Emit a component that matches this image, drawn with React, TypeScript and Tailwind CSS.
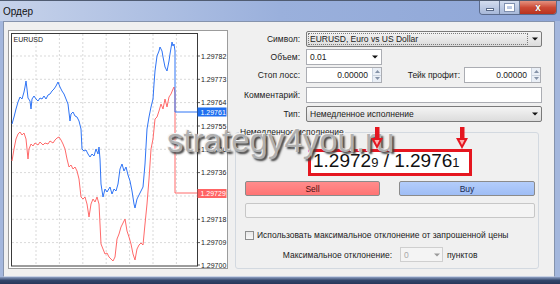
import React from "react";

const blue: [number, number][] = [
  [12,125],[14,118],[16,110],[18,103],[20,98],[22,100],[24,93],[25,88],[26,82],[27,90],[28,99],[30,102],[31,110],[32,100],[34,97],[36,100],[38,102],[40,99],[42,100],[44,97],[46,100],[48,96],[50,95],[52,92],[54,90],[56,87],[58,83],[60,88],[62,92],[64,95],[66,100],[68,105],[70,122],[71,115],[73,113],[75,117],[77,118],[79,122],[81,130],[82,150],[84,152],[86,151],[88,155],[90,158],[92,155],[94,157],[96,150],[98,155],[99,148],[100,160],[101,185],[103,198],[105,190],[107,193],[110,188],[112,195],[114,190],[116,192],[118,185],[120,170],[122,165],[124,172],[126,168],[128,176],[130,182],[132,192],[134,205],[135,209],[137,200],[139,196],[141,192],[143,188],[145,165],[147,130],[149,118],[151,108],[153,100],[154,85],[155,72],[157,57],[159,52],[160,48],[162,52],[163,58],[165,68],[167,72],[169,62],[170,55],[172,43],[173,47],[174,45],[175,52],[175,113],[197,113]
];
const red: [number, number][] = [
  [12,162],[14,150],[16,140],[18,135],[20,133],[22,136],[24,134],[26,140],[28,160],[29,150],[31,145],[33,147],[35,144],[38,146],[40,143],[43,146],[45,144],[48,145],[50,142],[53,144],[55,141],[57,139],[59,138],[61,141],[63,145],[65,150],[67,160],[69,168],[71,166],[73,170],[75,168],[77,172],[79,180],[81,198],[83,200],[85,198],[87,205],[89,218],[91,205],[93,200],[95,203],[97,198],[99,205],[101,245],[103,250],[105,255],[107,254],[109,258],[111,260],[113,262],[115,258],[117,240],[119,235],[121,228],[123,224],[125,220],[127,232],[129,238],[131,245],[133,255],[135,261],[137,250],[139,246],[141,244],[143,246],[145,225],[147,205],[149,180],[151,150],[153,140],[155,120],[157,118],[159,112],[161,105],[163,110],[165,100],[167,108],[169,98],[171,95],[173,90],[174,88],[175,94],[175,194],[197,194]
];

const pts = (a: [number, number][]) => a.map((p) => p.join(",")).join(" ");

const priceLines: [string, number][] = [
  ["1.29782", 57],
  ["1.29773", 80.3],
  ["1.29764", 103.6],
  ["1.29755", 127],
  ["1.29746", 150.3],
  ["1.29736", 173.6],
  ["1.29718", 220.3],
  ["1.29709", 243.6],
  ["1.29700", 266],
];
const gridY = [57, 80.3, 103.6, 127, 150.3, 173.6, 197, 220.3, 243.6];
const gridX = [36, 59.4, 82.8, 106.2, 129.6, 153, 176.4];

function Chart() {
  return (
    <div className="w-[220px] h-[239px] border border-[#9c9c9c] bg-white shrink-0">
      <svg width="218" height="237" viewBox="9 32 218 237" className="block">
        {gridX.map((x) => (
          <line key={"x" + x} x1={x} y1={35} x2={x} y2={267} stroke="#cfcfcf" strokeWidth="0.8" strokeDasharray="2 2" />
        ))}
        {gridY.map((y) => (
          <line key={"y" + y} x1={12} y1={y} x2={197} y2={y} stroke="#cfcfcf" strokeWidth="0.8" strokeDasharray="2 2" />
        ))}
        <rect x="11.5" y="34.5" width="186" height="232.5" fill="none" stroke="#3a3a3a" strokeWidth="1" />
        <polyline points={pts(red)} fill="none" stroke="#ff6a6a" strokeWidth="1" strokeLinejoin="round" />
        <polyline points={pts(blue)} fill="none" stroke="#2f74f5" strokeWidth="1" strokeLinejoin="round" />
        <text x="13.5" y="43" fontSize="7" fill="#1a1a1a" fontFamily="Liberation Sans, Arial, sans-serif">EURUSD</text>
        {priceLines.map(([t, y]) => (
          <g key={t}>
            <line x1={197} y1={y} x2={200} y2={y} stroke="#3a3a3a" strokeWidth="0.8" />
            <text x="201" y={y + 2.5} fontSize="7" fill="#1a1a1a" fontFamily="Liberation Sans, Arial, sans-serif">{t}</text>
          </g>
        ))}
        <rect x="197.5" y="108.5" width="29" height="9" fill="#1f6ff0" />
        <text x="200.5" y="115.8" fontSize="7" fill="#ffffff" fontFamily="Liberation Sans, Arial, sans-serif">1.29761</text>
        <rect x="197.5" y="190" width="29" height="9" fill="#ff6464" />
        <text x="200.5" y="197.3" fontSize="7" fill="#ffffff" fontFamily="Liberation Sans, Arial, sans-serif">1.29729</text>
      </svg>
    </div>
  );
}

function Caret({ color = "#111" }: { color?: string }) {
  return (
    <svg width="6" height="4" viewBox="0 0 6 4" className="block">
      <path d="M0 0.5H6L3 3.5Z" fill={color} />
    </svg>
  );
}

function Spin() {
  return (
    <div className="w-[9px] flex flex-col border-l border-[#cbd3de] bg-[#eaeff6]">
      <div className="flex-1 flex items-center justify-center border-b border-[#cbd3de]">
        <svg width="5" height="3" viewBox="0 0 5 3" className="block"><path d="M0 3L2.5 0L5 3Z" fill="#8593a8" /></svg>
      </div>
      <div className="flex-1 flex items-center justify-center">
        <svg width="5" height="3" viewBox="0 0 5 3" className="block"><path d="M0 0L2.5 3L5 0Z" fill="#8593a8" /></svg>
      </div>
    </div>
  );
}

function WindowControls() {
  return (
    <div className="flex h-[14px] mr-[3px] border border-t-0 border-[#5b6b8c] rounded-b-[4px] overflow-hidden">
      <div className="w-[20px] flex items-center justify-center bg-gradient-to-b from-[#d3dcee] to-[#a7b8d9] border-r border-[#6a7a98]">
        <div className="w-[8px] h-[3px] bg-white border border-[#5a6a88] mt-[4px]" />
      </div>
      <div className="w-[20px] flex items-center justify-center bg-gradient-to-b from-[#d3dcee] to-[#a7b8d9] border-r border-[#6a7a98]">
        <div className="w-[9px] h-[7px] border-[2px] border-white outline outline-1 outline-[#8090b0]" />
      </div>
      <div className="w-[36px] flex items-center justify-center bg-gradient-to-b from-[#e4917f] via-[#cc4a36] to-[#b8321f]">
        <span className="text-white text-[10px] font-bold leading-none [text-shadow:0_0_1px_#6a1a10]">x</span>
      </div>
    </div>
  );
}

function Label({ w, children }: { w: string; children: React.ReactNode }) {
  return <div className={`${w} text-right shrink-0`}>{children}</div>;
}

export default function App() {
  return (
    <div className="relative w-[560px] h-[284px] overflow-hidden flex flex-col bg-[#a4b7dd] font-['Liberation_Sans',Arial,sans-serif] text-[8.5px] leading-[10px] text-[#1a1a1a]">
      {/* title bar */}
      <div className="h-[21px] shrink-0 flex items-start border-t border-[#505c72] bg-gradient-to-r from-[#c6d2ea] via-[#9ab0dc] to-[#8ea6d7]">
        <span className="mt-[5px] ml-[3px] text-[10px] leading-[12px] text-[#111]">Ордер</span>
        <div className="flex-1" />
        <WindowControls />
      </div>

      {/* body */}
      <div className="flex-1 flex pl-[3px] pr-[5px] min-h-0">
        <div className="flex-1 flex bg-[#f0f0f0] border border-[#8593ad] border-b-[#c9d3e6]">
          <div className="ml-[4px] mt-[8px]">
            <Chart />
          </div>

          {/* right panel */}
          <div className="ml-[4px] mt-[9px] flex flex-col w-[318px]">
            {/* Символ */}
            <div className="flex items-center h-[16px]">
              <Label w="w-[68px]">Символ:</Label>
              <div className="ml-[6px] w-[236px] h-[16px] flex items-center border border-[#7a7a7a] rounded-[2px] bg-gradient-to-b from-[#f4f4f4] to-[#dcdcdc]">
                <div className="flex-1 h-[12px] ml-[1px] flex items-center pl-[1px] border border-dotted border-[#7a7a7a]">EURUSD, Euro vs US Dollar</div>
                <div className="w-[13px] flex justify-center"><Caret /></div>
              </div>
            </div>
            {/* Объем */}
            <div className="flex items-center h-[16px] mt-[2px]">
              <Label w="w-[68px]">Объем:</Label>
              <div className="ml-[6px] w-[76px] h-[16px] flex items-center border border-[#abadb3] bg-white">
                <div className="flex-1 pl-[3px]">0.01</div>
                <div className="w-[12px] flex justify-center"><Caret /></div>
              </div>
            </div>
            {/* Стоп лосс / Тейк профит */}
            <div className="flex items-center h-[16px] mt-[2px]">
              <Label w="w-[68px]">Стоп лосс:</Label>
              <div className="ml-[6px] w-[76px] h-[16px] flex border border-[#abadb3] bg-white">
                <div className="flex-1 flex items-center justify-end pr-[4px]">0.00000</div>
                <Spin />
              </div>
              <Label w="w-[78px]">Тейк профит:</Label>
              <div className="ml-[4px] w-[77px] h-[16px] flex border border-[#abadb3] bg-white">
                <div className="flex-1 flex items-center justify-end pr-[4px]">0.00000</div>
                <Spin />
              </div>
            </div>
            {/* Комментарий */}
            <div className="flex items-center h-[16px] mt-[4px]">
              <Label w="w-[68px]">Комментарий:</Label>
              <div className="ml-[6px] w-[236px] h-[16px] border border-[#abadb3] bg-white" />
            </div>
            {/* Тип */}
            <div className="flex items-center h-[16px] mt-[3px]">
              <Label w="w-[68px]">Тип:</Label>
              <div className="ml-[6px] w-[236px] h-[16px] flex items-center border border-[#7a7a7a] rounded-[2px] bg-gradient-to-b from-[#f4f4f4] to-[#dcdcdc]">
                <div className="flex-1 pl-[3px]">Немедленное исполнение</div>
                <div className="w-[13px] flex justify-center"><Caret /></div>
              </div>
            </div>

            {/* group */}
            <fieldset className="ml-[3px] mt-[5px] w-[304px] h-[142px] border border-[#d3d9e0] rounded-[3px] bg-[#f0f0f0]">
              <legend className="ml-[3px] px-[1px] leading-[10px]">Немедленное исполнение</legend>
              <div className="flex flex-col">
                <div className="mt-[12px] ml-[72px] w-[164px] h-[27px] border-[3px] border-[#e5161f] bg-white flex items-start pl-[2px] pt-[1px]">
                  <div className="flex items-baseline leading-[16px] text-[#111] whitespace-pre">
                    <span className="text-[19px]">1.2972</span>
                    <span className="text-[13px]">9</span>
                    <span className="text-[19px]"> / 1.2976</span>
                    <span className="text-[13px]">1</span>
                  </div>
                </div>
                <div className="flex mt-[5px] h-[15px]">
                  <div className="ml-[9px] w-[135px] flex items-center justify-center border border-[#8b8b8b] rounded-[2px] bg-gradient-to-b from-[#ff8c8c] to-[#ff7474] text-[#4a1010]">Sell</div>
                  <div className="ml-[19px] w-[136px] flex items-center justify-center border border-[#8b8b8b] rounded-[2px] bg-gradient-to-b from-[#b3cdfb] to-[#9fbdf5] text-[#1b2a50]">Buy</div>
                </div>
                <div className="ml-[9px] mt-[7px] w-[290px] h-[15px] border border-[#c7c7c7] rounded-[2px] bg-[#f4f4f4]" />
                <div className="ml-[9px] mt-[12px] flex items-center h-[10px]">
                  <div className="w-[9px] h-[9px] border border-[#8e8f8f] bg-gradient-to-b from-[#e8e8e8] to-[#f8f8f8]" />
                  <span className="ml-[3px]">Использовать максимальное отклонение от запрошенной цены</span>
                </div>
                <div className="mt-[7px] flex items-center h-[15px]">
                  <Label w="w-[156px]">Максимальное отклонение:</Label>
                  <div className="ml-[8px] w-[43px] h-[15px] flex items-center border border-[#cfcfcf] bg-[#f4f4f4] text-[#a9a9a9]">
                    <div className="flex-1 pl-[3px]">0</div>
                    <div className="w-[11px] flex justify-center"><Caret color="#9a9a9a" /></div>
                  </div>
                  <span className="ml-[4px]">пунктов</span>
                </div>
              </div>
            </fieldset>
          </div>
        </div>
      </div>

      {/* bottom frame */}
      <div className="h-[7px] shrink-0 bg-gradient-to-b from-[#8ea0c2] via-[#33456a] to-[#27365a]" />

      {/* watermark overlay */}
      <div className="absolute left-[167px] top-[124px] text-[33px] leading-[33px] text-[#b0b0b0] font-['Liberation_Sans',Arial,sans-serif] [text-shadow:-1px_-1px_0_#f4f4f4,2px_2px_2px_#3c3c3c] pointer-events-none whitespace-nowrap">
        strategy4you.ru
      </div>

      {/* red annotation arrows */}
      <svg className="absolute left-[370px] top-[127px]" width="14" height="23" viewBox="0 0 14 23">
        <rect x="5" y="0" width="4.5" height="13" fill="#e5161f" />
        <path d="M1 11H13L7 22Z" fill="#e5161f" />
        <path d="M4.5 13H9.5L7 18Z" fill="#ffb0b0" />
      </svg>
      <svg className="absolute left-[455px] top-[127px]" width="14" height="23" viewBox="0 0 14 23">
        <rect x="5" y="0" width="4.5" height="13" fill="#e5161f" />
        <path d="M1 11H13L7 22Z" fill="#e5161f" />
        <path d="M4.5 13H9.5L7 18Z" fill="#ffb0b0" />
      </svg>
    </div>
  );
}
